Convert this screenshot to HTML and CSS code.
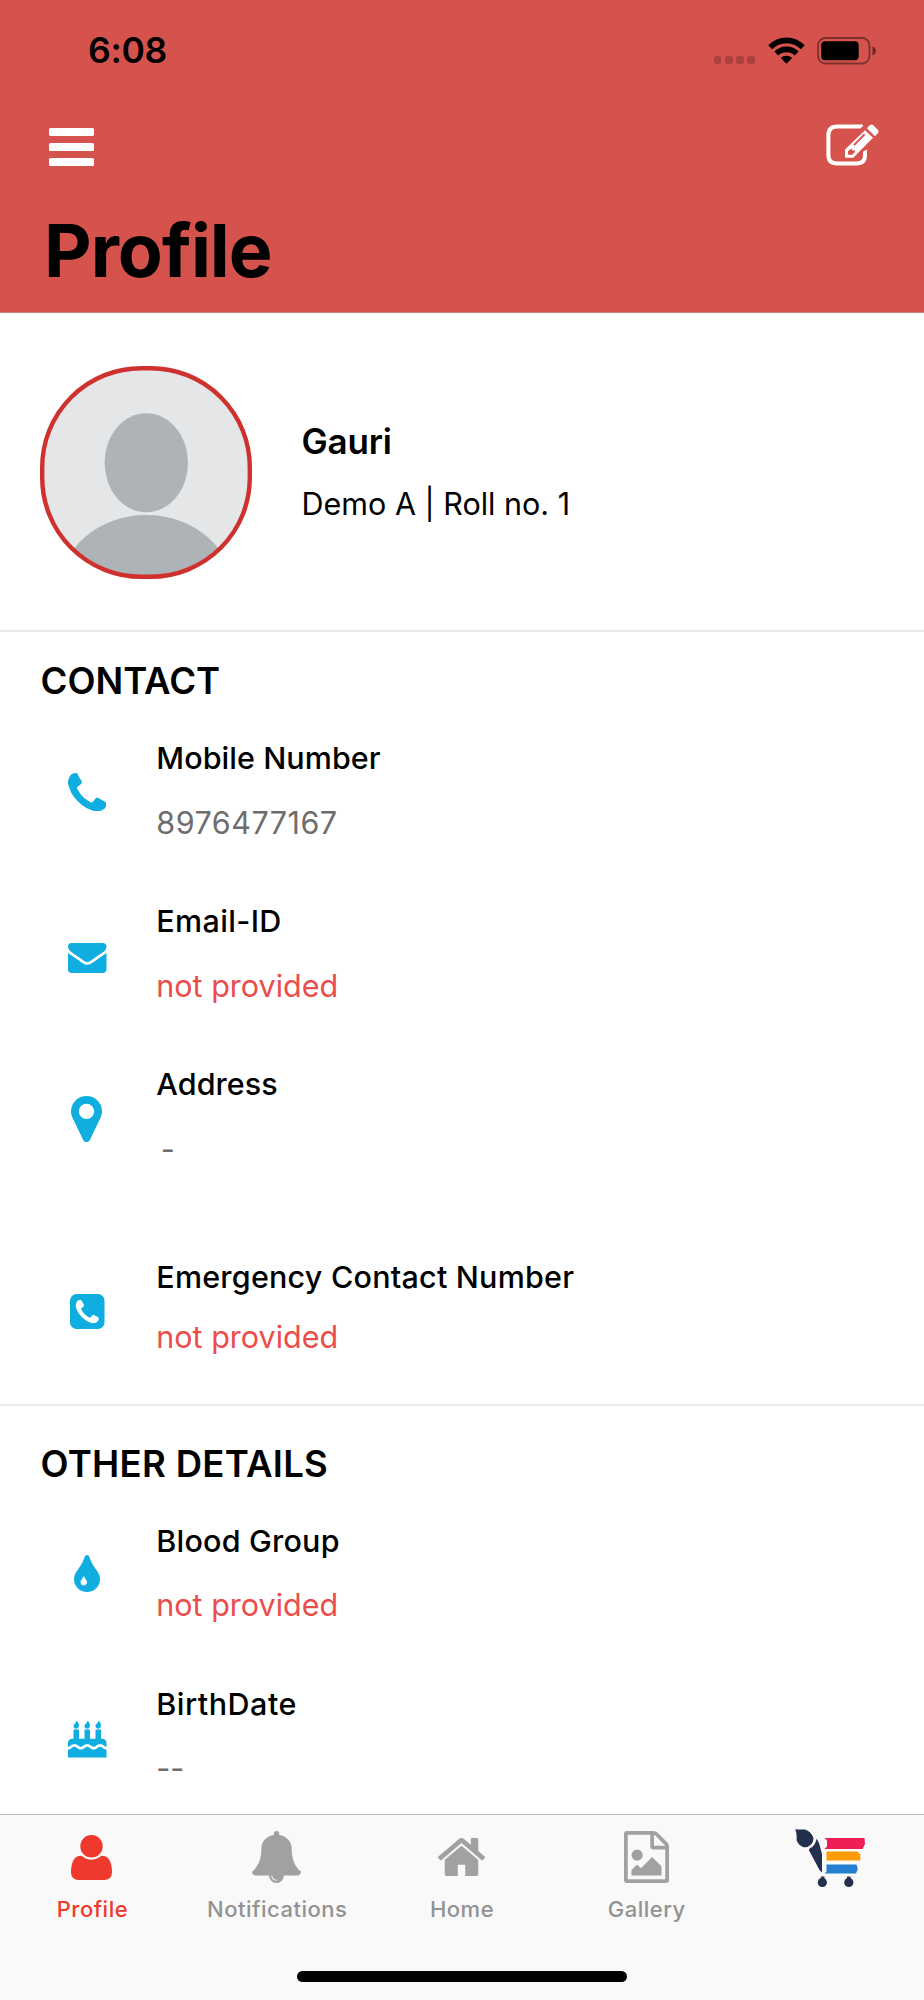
FILE: index.html
```html
<!DOCTYPE html>
<html lang="en">
<head>
<meta charset="utf-8">
<title>Profile</title>
<link rel="stylesheet" href="styles.css">
</head>
<body>
<div class="screen">
  <header class="header">
    <div class="status">
      <span class="time">6:08</span>
      <div class="status-icons">
        <span class="dots"><i></i><i></i><i></i><i></i></span>
        <svg class="wifi" width="37" height="27" viewBox="0 0 37 27">
          <path d="M0.3 8.2Q8 .4 18.500 .4T36.700 8.200L32.900 12.200Q27 6.200 18.500 6.200T4.100 12.200Z"/>
          <path d="M6.400 14.600Q11.500 9.600 18.500 9.600T30.600 14.600L26.700 18.600Q23.500 15.300 18.500 15.300T10.300 18.600Z"/>
          <path d="M12.800 21Q15 18.800 18.500 18.800T24.200 21L18.500 26.800Z"/>
        </svg>
        <svg class="battery" width="60" height="28" viewBox="0 0 60 28">
          <rect x="1" y="1" width="51.500" height="25.500" rx="7.500" fill="none" stroke="#000" stroke-opacity=".42" stroke-width="1.800"/>
          <rect x="4.200" y="4.200" width="37.500" height="19" rx="4"/>
          <path d="M55.500 9.200Q58.800 10.500 58.800 13.700T55.500 18.200Z" fill-opacity=".5"/>
        </svg>
      </div>
    </div>
    <div class="nav">
      <span class="bars"><i></i><i></i><i></i></span>
      <svg class="edit" width="54" height="42" viewBox="0 0 54 42">
        <path d="M34.500 2.400H11Q2.400 2.400 2.400 11V31Q2.400 39.500 11 39.500H30.500Q39 39.500 39 31V28" fill="none" stroke="#fff" stroke-width="4"/>
        <path d="M34 .4H36.500L37.200 2L34 4.400ZM37 29V27.800L40.900 25.500V29Z" fill="#fff"/>
        <path fill="#fff" fill-rule="evenodd" d="M39 6.200L47 13.800L27.300 33.700H19V25.500ZM38 9.600L27.300 20.500L28.700 21.800L39.200 11ZM25.500 24.500L22 27.200V30.600L25.800 31L29 28L28.300 25.500L26.800 27Z"/>
        <path fill="#fff" d="M40.800 4.300L43.500 1.400Q45.500-.4 47.500 1.500L51.500 5.400Q53.400 7.400 51.600 9.400L48.900 12.200Z"/>
      </svg>
    </div>
    <h1 class="title">Profile</h1>
  </header>

  <main class="content">
    <section class="person">
      <div class="photo">
        <svg class="avatar" width="212" height="213" viewBox="0 0 212 213">
          <defs><clipPath id="frame"><rect x="2" y="2" width="208" height="209" rx="99"/></clipPath></defs>
          <g clip-path="url(#frame)">
            <rect width="212" height="213" fill="#e4e6e8"/>
            <ellipse cx="106.300" cy="96.700" rx="41.700" ry="49.500" fill="#aeb3b7"/>
            <ellipse cx="106.300" cy="225" rx="87" ry="76" fill="#aeb3b7"/>
          </g>
          <rect x="2.200" y="2.200" width="207.600" height="208.600" rx="99" fill="none" stroke="#cf322e" stroke-width="4.400"/>
        </svg>
      </div>
      <div class="who">
        <div class="name">Gauri</div>
        <div class="roll">Demo A | Roll no. 1</div>
      </div>
    </section>

    <section class="group contact">
      <h2>CONTACT</h2>
      <div class="item">
        <svg class="ico phone" width="38.500" height="38.500" viewBox="192 128 1408 1408" preserveAspectRatio="none"><path d="M1600 1240q0 27-10 70.500t-21 68.500q-21 50-122 106-94 51-186 51-27 0-53-3.500t-57.500-12.500-47-14.500-55.500-20.500-49-18q-98-35-175-83-127-79-264-216t-216-264q-48-77-83-175-3-9-18-49t-20.500-55.500-14.500-47-12.500-57.500-3.500-53q0-92 51-186 56-101 106-122 25-11 68.500-21t70.500-10q14 0 21 3 18 6 53 76 11 19 30 54t35 63.500 31 53.500q3 4 17.500 25t21.500 35.500 7 28.500q0 20-28.500 50t-62 55-62 53-28.500 46q0 9 5 22.500t8.500 20.500 14 24 11.500 19q76 137 174 235t235 174q2 1 19 11.500t24 14 20.500 8.500 22.500 5q18 0 46-28.500t53-62 55-62 50-28.500q14 0 28.500 7t35.500 21.500 25 17.500q25 15 53.500 31t63.500 35 54 30q70 35 76 53 3 7 3 21z"/></svg>
        <div class="label">Mobile Number</div>
        <div class="value digits">8976477167</div>
      </div>
      <div class="item">
        <svg class="ico envelope" width="38.500" height="30" viewBox="0 256 1792 1408" preserveAspectRatio="none"><path d="M1792 710v794q0 66-47 113t-113 47h-1472q-66 0-113-47t-47-113v-794q44 49 101 87 362 246 497 345 57 42 92.500 65.500t94.500 48 110 24.500h2q51 0 110-24.500t94.500-48 92.500-65.500q170-123 498-345 57-39 100-87zm0-294q0 79-49 151t-122 123q-376 261-468 325-10 7-42.500 31t-54 38.500-52 32.500-57.500 27-50 9h-2q-23 0-50-9t-57.500-27-52-32.500-54-38.500-42.500-31q-91-64-262-182.500t-205-142.500q-62-42-117-115.500t-55-136.500q0-78 41.500-130t118.500-52h1472q65 0 112.500 47t47.500 113z"/></svg>
        <div class="label email">Email-ID</div>
        <div class="value missing">not provided</div>
      </div>
      <div class="item address">
        <svg class="ico marker" width="31" height="46" viewBox="384 128 1024 1536" preserveAspectRatio="none"><path d="M1152 640q0-106-75-181t-181-75-181 75-75 181 75 181 181 75 181-75 75-181zm256 0q0 109-33 179l-364 774q-16 33-47.500 52t-67.500 19-67.500-19-46.500-52l-365-774q-33-70-33-179 0-212 150-362t362-150 362 150 150 362z"/></svg>
        <div class="label">Address</div>
        <div class="value dash">-</div>
      </div>
      <div class="item emergency">
        <svg class="ico square" width="34.500" height="35" viewBox="128 128 1536 1536" preserveAspectRatio="none"><path d="M1408 1193q0-11-2-16t-18-16.500-40.500-25-47.500-26.500-45.500-25-28.500-15q-5-3-19-13t-25-15-21-5q-15 0-36.500 20.500t-39.500 45-38.500 45-33.500 20.500q-7 0-16.500-3.500t-15.500-6.500-17-9.500-14-8.500q-99-55-170-126.500t-127-170.500q-2-3-8.500-14t-9.500-17-6.500-15.500-3.500-16.500q0-13 20.500-33.500t45-38.500 45-39.500 20.500-36.500q0-10-5-21t-15-25-13-19q-3-6-15-28.500t-25-45.500-26.500-47.500-25-40.500-16.500-18-16-2q-48 0-101 22-46 21-80 94.500t-34 130.500q0 16 2.500 34t5 30.500 9 33 10 29.500 12.500 33 11 30q60 164 216.500 320.500t320.500 216.500q6 2 30 11t33 12.500 29.500 10 33 9 30.500 5 34 2.500q57 0 130.500-34t94.500-80q22-53 22-101zm256-777v960q0 119-84.500 203.500t-203.500 84.500h-960q-119 0-203.500-84.500t-84.500-203.500v-960q0-119 84.500-203.500t203.500-84.500h960q119 0 203.500 84.500t84.500 203.500z"/></svg>
        <div class="label long">Emergency Contact Number</div>
        <div class="value missing">not provided</div>
      </div>
    </section>

    <section class="group other">
      <h2>OTHER DETAILS</h2>
      <div class="item">
        <svg class="ico tint" width="26" height="37" viewBox="384 64 1024 1472" preserveAspectRatio="none"><path d="M896 1152q0-36-20-69-1-1-15.500-22.500t-25.500-38-25-44-21-50.500q-4-16-21-16t-21 16q-7 23-21 50.500t-25 44-25.500 38-15.500 22.500q-20 33-20 69 0 53 37.500 90.500t90.500 37.500 90.500-37.500 37.500-90.500zm512-128q0 212-150 362t-362 150-362-150-150-362q0-145 81-275 6-9 62.500-90.500t101-151 99.500-178 83-201.500q9-30 34-47t51-17 51.500 17 33.500 47q28 93 83 201.500t99.500 178 101 151 62.500 90.500q81 127 81 275z"/></svg>
        <div class="label blood">Blood Group</div>
        <div class="value missing">not provided</div>
      </div>
      <div class="item">
        <svg class="ico cake" width="38.500" height="37.500" viewBox="0 0 1792 1792" preserveAspectRatio="none"><path d="M1792 1408v384h-1792v-384q45 0 85-14t59-27.500 47-37.500q30-27 51.500-38t56.500-11q24 0 44 7t31 15 33 27q29 25 47 38t58 27 86 14q45 0 85-14.500t58-27 48-37.500q21-19 32.500-27t31-15 43.500-7q35 0 56.500 11t51.500 38q28 24 47 37.500t59 27.500 85 14 85-14 59-27.500 47-37.500q30-27 51.500-38t56.500-11q34 0 55.500 11t51.500 38q28 24 47 37.500t59 27.500 85 14zm0-320v192q-24 0-44-7t-31-15-33-27q-29-25-47-38t-58-27-85-14q-46 0-86 14t-58 27-47 38q-22 19-33 27t-31 15-44 7q-35 0-56.500-11t-51.500-38q-29-25-47-38t-58-27-86-14q-45 0-85 14.500t-58 27-48 37.500q-21 19-32.500 27t-31 15-43.500 7q-35 0-56.500-11t-51.500-38q-28-24-47-37.500t-59-27.500-85-14q-46 0-86 14t-58 27-47 38q-22 19-33 27t-31 15-44 7v-192q0-80 56-136t136-56h64v-448h256v448h256v-448h256v448h256v-448h256v448h64q80 0 136 56t56 136zm-1280-832q0 77-36 118.500t-92 41.500q-53 0-90.500-37.500t-37.500-90.500q0-29 9.500-51t23.500-34 31-28 31-31.500 23.500-44.500 9.500-67q38 0 83 74t45 150zm512 0q0 77-36 118.500t-92 41.500q-53 0-90.500-37.500t-37.500-90.500q0-29 9.500-51t23.500-34 31-28 31-31.500 23.500-44.500 9.500-67q38 0 83 74t45 150zm512 0q0 77-36 118.500t-92 41.500q-53 0-90.500-37.500t-37.500-90.500q0-29 9.500-51t23.500-34 31-28 31-31.500 23.500-44.500 9.500-67q38 0 83 74t45 150z"/></svg>
        <div class="label birth">BirthDate</div>
        <div class="value dashes">--</div>
      </div>
    </section>
  </main>

  <footer class="tabbar">
    <nav class="tabs">
      <div class="tab active">
        <span class="tab-icon"><svg width="41" height="45" viewBox="192 128 1408 1536" preserveAspectRatio="none"><path d="M1600 1405q0 120-73 189.500t-194 69.500h-874q-121 0-194-69.500t-73-189.500q0-53 3.500-103.500t14-109 26.500-108.500 43-97.500 62-81 85.500-53.500 111.500-20q9 0 42 21.500t74.500 48 108 48 133.500 21.500 133.500-21.500 108-48 74.500-48 42-21.500q61 0 111.500 20t85.500 53.500 62 81 43 97.500 26.500 108.500 14 109 3.500 103.500zm-320-893q0 159-112.500 271.500t-271.500 112.500-271.500-112.500-112.500-271.500 112.500-271.500 271.500-112.500 271.500 112.500 112.500 271.500z"/></svg></span>
        <span class="tab-label">Profile</span>
      </div>
      <div class="tab">
        <span class="tab-icon"><svg width="49" height="52" viewBox="64 0 1664 1792" preserveAspectRatio="none"><path d="M912 1696q0-16-16-16-59 0-101.500-42.500t-42.500-101.500q0-16-16-16t-16 16q0 73 51.500 124.500t124.500 51.500q16 0 16-16zm816-288q0 52-38 90t-90 38h-448q0 106-75 181t-181 75-181-75-75-181h-448q-52 0-90-38t-38-90q50-42 91-88t85-119.500 74.500-158.500 50-206 19.500-260q0-152 117-282.500t307-158.500q-8-19-8-39 0-40 28-68t68-28 68 28 28 68q0 20-8 39 190 28 307 158.500t117 282.500q0 139 19.500 260t50 206 74.500 158.500 85 119.500 91 88z"/></svg></span>
        <span class="tab-label">Notifications</span>
      </div>
      <div class="tab">
        <span class="tab-icon"><svg width="47" height="38" viewBox="89 253 1614 1283" preserveAspectRatio="none"><path d="M1472 992v480q0 26-19 45t-45 19h-384v-384h-256v384h-384q-26 0-45-19t-19-45v-480q0-1 .5-3t.5-3l575-474 575 474q1 2 1 6zm223-69l-62 74q-8 9-21 11h-3q-13 0-21-7l-692-577-692 577q-12 8-24 7-13-2-21-11l-62-74q-8-10-7-23.500t11-21.500l719-599q32-26 76-26t76 26l244 204v-195q0-14 9-23t23-9h192q14 0 23 9t9 23v408l219 182q10 8 11 21.500t-7 23.500z"/></svg></span>
        <span class="tab-label">Home</span>
      </div>
      <div class="tab">
        <span class="tab-icon"><svg width="45" height="52" viewBox="128 0 1536 1792" preserveAspectRatio="none"><path d="M1596 380q28 28 48 76t20 88v1152q0 40-28 68t-68 28h-1344q-40 0-68-28t-28-68v-1600q0-40 28-68t68-28h896q40 0 88 20t76 48zm-444-244v376h376q-10-29-22-41l-313-313q-12-12-41-22zm384 1528v-1024h-416q-40 0-68-28t-28-68v-416h-768v1536h1280zm-128-448v320h-1024v-192l192-192 128 128 384-384zm-832-192q-80 0-136-56t-56-136 56-136 136-56 136 56 56 136-56 136-136 56z"/></svg></span>
        <span class="tab-label">Gallery</span>
      </div>
      <div class="tab">
        <span class="tab-icon cart"><svg width="70" height="60" viewBox="0 0 70 60">
          <g fill="#22304d">
            <path d="M.2.200Q5 .6 10 .4Q16 2 18.500 9Q18.500 13 16 15.500Q12.500 19 8 18Q3 16 1.600 11Q2 4 .2.200Z"/>
            <path d="M21.700 9.800L24 14L27 25V43.500L24.500 41L13.800 21Q14.500 18.700 17 18.300Q20 16 21.700 9.800Z"/>
            <circle cx="27.300" cy="53.400" r="4.600"/><circle cx="53.800" cy="53.400" r="4.600"/>
            <path d="M26 47.500H29.500V50H26ZM52 47.500H55.500V50H52Z"/>
          </g>
          <path d="M29.500 9H69.500L70 15L67.500 20H29.500L32 17.500V11.500Z" fill="#ee1f55"/>
          <path d="M31.500 22.500H62L65.300 25V31.500H31.500Z" fill="#fd9c04"/>
          <path d="M31.500 35.500H61.500L62.800 40L61 44.500H29.500L31.500 42.500Z" fill="#237fd0"/>
        </svg></span>
      </div>
    </nav>
    <div class="home-indicator"></div>
  </footer>
</div>
</body>
</html>
```
FILE: styles.css
```css
* { box-sizing: border-box; }
body {
  margin: 0;
  background: #fff;
  font-family: Inter, "Liberation Sans", sans-serif;
  color: #000;
}
svg { display: block; flex: none; }
.screen {
  width: 924px;
  height: 2000px;
  display: flex;
  flex-direction: column;
  overflow: hidden;
}
.header {
  flex: none;
  height: 313px;
  background: #d6524d;
  border-bottom: 1px solid #cb7e7b;
}
.status {
  height: 100px;
  padding: 37px 47px 0 88px;
  display: flex;
  justify-content: space-between;
  align-items: flex-start;
}
.time {
  padding-top: 1px;
  font-size: 35.5px;
  font-weight: 600;
  line-height: 26px;
  letter-spacing: -0.3px;
}
.status-icons { display: flex; }
.dots { display: flex; gap: 3.5px; padding: 19px 13px 0 0; }
.dots i { width: 7.700px; height: 7.500px; border-radius: 2.500px; background: #ab423e; }
.wifi { margin-right: 12px; }
.nav {
  height: 100px;
  padding: 24px 44px 0 49px;
  display: flex;
  justify-content: space-between;
  align-items: flex-start;
}
.bars { display: flex; flex-direction: column; gap: 7.500px; padding-top: 4px; }
.bars i { width: 45px; height: 7.500px; border-radius: 1.500px; background: #fff; }
.title {
  margin: 6px 0 0 44px;
  font-size: 73.5px;
  font-weight: 700;
  line-height: 90px;
  letter-spacing: -0.95px;
}
.content { flex: 1; min-height: 0; overflow: hidden; }
.person {
  height: 319px;
  padding: 53px 0 0 40px;
  display: flex;
  border-bottom: 2px solid #e9e9e9;
}
.who { padding: 53px 0 0 49.5px; }
.name {
  font-size: 35px;
  font-weight: 600;
  line-height: 44px;
  letter-spacing: -0.2px;
}
.roll {
  margin-top: 21px;
  font-size: 30.5px;
  line-height: 40px;
}
.contact { height: 774px; padding-top: 27px; border-bottom: 2px solid #e9e9e9; }
.other { padding-top: 35.6px; }
.group h2 {
  margin: 0 0 35px 40.500px;
  font-size: 36.500px;
  font-weight: 600;
  line-height: 44px;
}
.other h2 { letter-spacing: 0.3px; }
.item {
  height: 163px;
  display: grid;
  grid-template-columns: 156.300px 1fr;
  grid-template-rows: 40px 40px;
  row-gap: 24.700px;
}
.item.address { height: 193px; }
.item.emergency { row-gap: 20.200px; }
.ico { grid-row: 1 / 3; fill: #10aee0; }
.ico.phone { margin: 34.500px 0 0 67.800px; }
.ico.envelope { margin: 42px 0 0 68px; }
.ico.marker { margin: 32px 0 0 71.300px; }
.ico.square { margin: 37px 0 0 70px; }
.ico.tint { margin: 34.500px 0 0 74px; }
.ico.cake { margin: 36.500px 0 0 68px; }
.label { grid-column: 2; font-size: 30.5px; font-weight: 500; line-height: 40px; letter-spacing: 0.060px; }
.label.email { letter-spacing: 0.350px; }
.label.long { letter-spacing: 0.220px; }
.label.blood { letter-spacing: 0.200px; }
.label.birth { letter-spacing: 0.500px; }
.value { grid-column: 2; font-size: 30.5px; line-height: 40px; color: #6d6d6d; }
.digits { letter-spacing: 0.500px; }
.missing { color: #ea4d4b; }
.dash { padding-left: 4.500px; }
.tabbar {
  flex: none;
  height: 186px;
  background: #f9f9f9;
  border-top: 1px solid #bfbfbf;
}
.tabs { display: grid; grid-template-columns: repeat(5, 1fr); height: 156px; }
.tab {
  display: flex;
  flex-direction: column;
  align-items: center;
  color: #929292;
  fill: #a1a1a1;
}
.tab.active { color: #ef392c; fill: #ef392c; }
.tab-icon { height: 80px; padding: 5px 1px 1px 0; display: flex; align-items: center; }
.tab-icon.cart { padding: 7px 3px 0 0; }
.tab-label { font-size: 22px; font-weight: 500; line-height: 28px; letter-spacing: 0.5px; }
.home-indicator {
  width: 330px;
  height: 11px;
  margin: 0 auto;
  border-radius: 6px;
  background: #000;
}
```
